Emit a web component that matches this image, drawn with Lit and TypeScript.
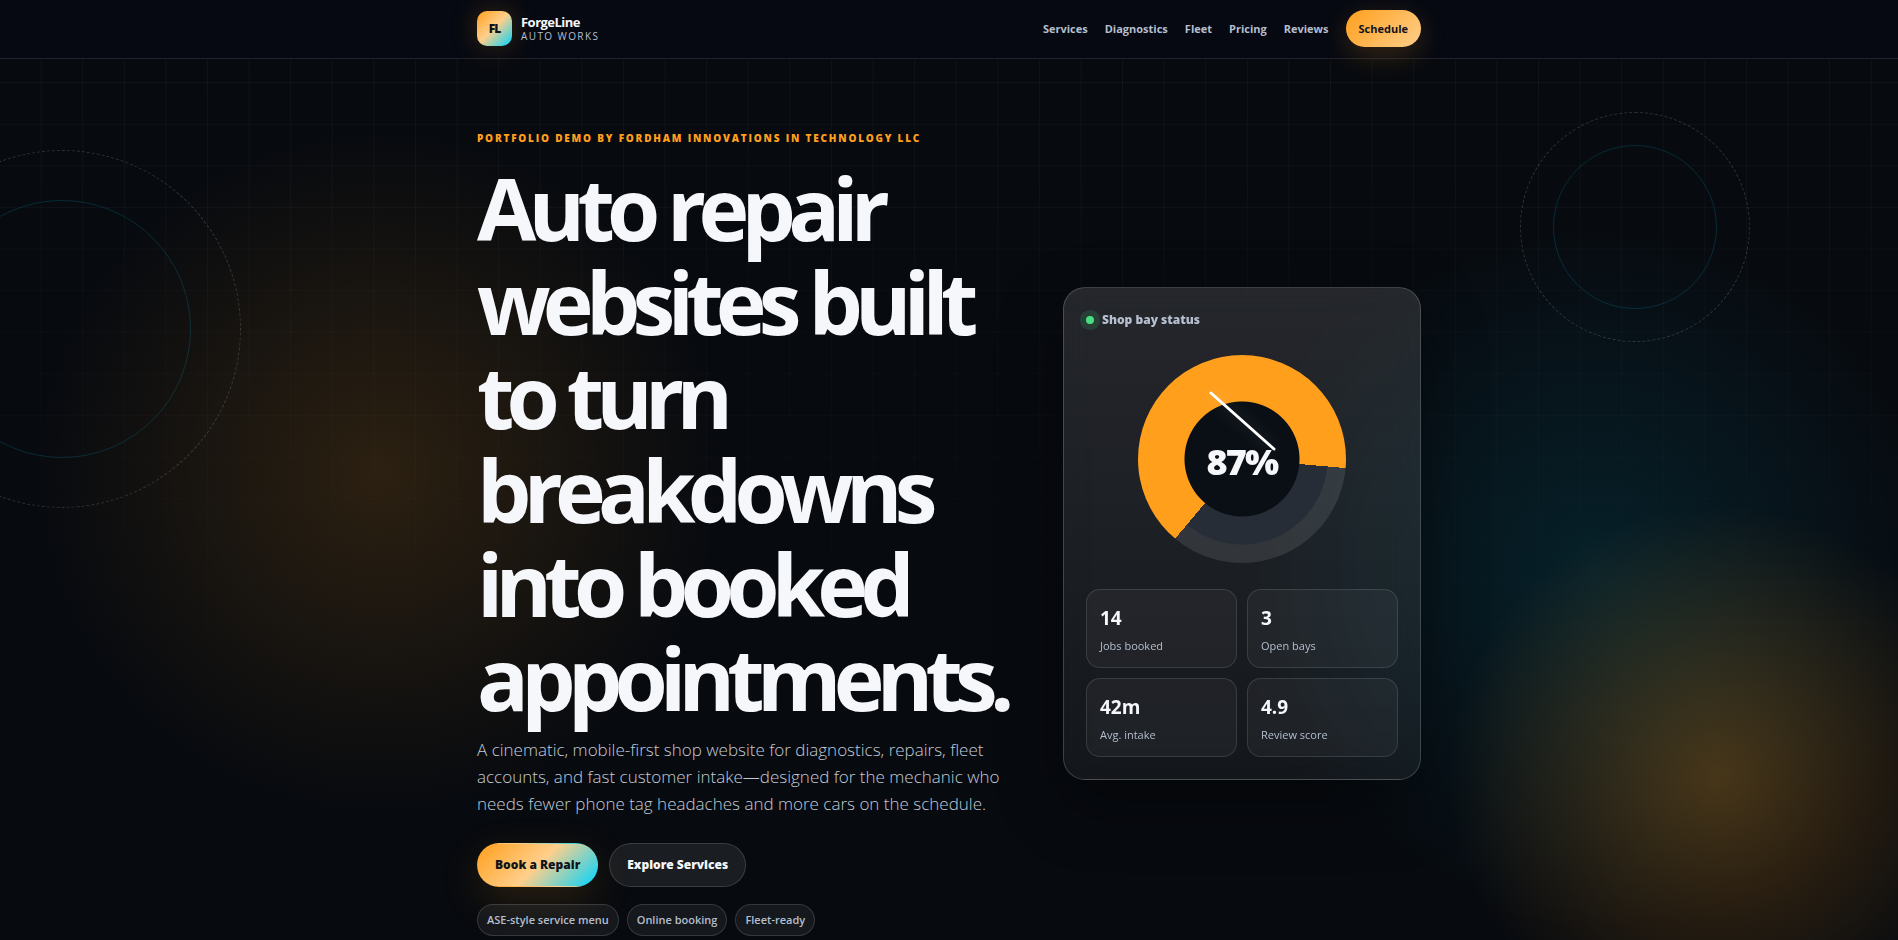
import { LitElement, html, css } from "lit";
import { customElement } from "lit/decorators.js";

const NAV = ["Services", "Diagnostics", "Fleet", "Pricing", "Reviews"];
const CHIPS = ["ASE-style service menu", "Online booking", "Fleet-ready"];
const STATS = [
  ["14", "Jobs booked"],
  ["3", "Open bays"],
  ["42m", "Avg. intake"],
  ["4.9", "Review score"],
];

@customElement("shop-status")
class ShopStatus extends LitElement {
  static styles = css`
    :host {
      display: block;
      box-sizing: border-box;
      padding: 22px;
      border: 1px solid rgba(255, 255, 255, 0.18);
      border-radius: 22px;
      background: linear-gradient(180deg, rgba(255, 255, 255, 0.12), rgba(255, 255, 255, 0.055));
      box-shadow: 0 24px 64px rgba(0, 0, 0, 0.4);
      backdrop-filter: blur(18px);
    }
    .head {
      display: flex;
      align-items: center;
      gap: 8px;
      margin: 0;
      color: #b5bfce;
      font-size: 12px;
      font-weight: 800;
      line-height: 20px;
    }
    .dot {
      width: 8px;
      height: 8px;
      border-radius: 50%;
      background: #4ade80;
      box-shadow: 0 0 0 6px rgba(74, 222, 128, 0.14);
    }
    .gauge {
      position: relative;
      display: grid;
      place-items: center;
      box-sizing: border-box;
      width: 208px;
      height: 208px;
      margin: 25px auto 26px;
      padding-top: 4px;
      border-radius: 50%;
      background:
        radial-gradient(circle, #0a0e15 57px, transparent 58px),
        conic-gradient(from 220deg, #ff9f1c 0 235deg, transparent 235deg),
        radial-gradient(circle, #262d37 85px, rgba(255, 255, 255, 0.1) 86px);
    }
    .value {
      color: #f5f7fb;
      font-size: 36px;
      font-weight: 900;
      letter-spacing: -0.05em;
    }
    .needle {
      position: absolute;
      inset: 0;
      filter: drop-shadow(0 0 8px rgba(255, 255, 255, 0.2));
    }
    .stats {
      display: grid;
      grid-template-columns: 1fr 1fr;
      gap: 10px;
      margin: 0;
    }
    .stat {
      display: flex;
      flex-direction: column-reverse;
      gap: 4px;
      padding: 14px 13px 11px;
      border: 1px solid rgba(255, 255, 255, 0.12);
      border-radius: 14px;
      background: rgba(255, 255, 255, 0.04);
    }
    .stat dt {
      color: #b5bfce;
      font-size: 11px;
      line-height: 20px;
    }
    .stat dd {
      margin: 0;
      color: #f5f7fb;
      font-size: 19px;
      font-weight: 700;
      line-height: 28px;
    }
  `;

  render() {
    return html`
      <p class="head"><span class="dot"></span>Shop bay status</p>
      <div class="gauge">
        <span class="value">87%</span>
        <svg class="needle" viewBox="0 0 208 208" aria-hidden="true">
          <path d="M73 38 L136 94" stroke="#fff" stroke-width="3" stroke-linecap="round" />
        </svg>
      </div>
      <dl class="stats">
        ${STATS.map(([n, label]) => html`<div class="stat"><dt>${label}</dt><dd>${n}</dd></div>`)}
      </dl>
    `;
  }
}

@customElement("app-root")
class AppRoot extends LitElement {
  static styles = css`
    :host {
      display: block;
      position: relative;
      overflow: hidden;
      min-height: 100vh;
      background:
        radial-gradient(circle at 20% 48%, rgba(255, 159, 28, 0.15), transparent 345px),
        radial-gradient(circle at 1718px 775px, rgba(255, 159, 28, 0.26), transparent 270px),
        radial-gradient(circle at 84% 58%, rgba(0, 212, 255, 0.11), transparent 360px),
        #070a0f;
      color: #f5f7fb;
      font-family: "Open Sans", "Noto Sans", sans-serif;
    }
    a {
      color: inherit;
      text-decoration: none;
    }
    .grid {
      position: absolute;
      inset: 0;
      background-image:
        linear-gradient(rgba(255, 255, 255, 0.045) 1px, transparent 1px),
        linear-gradient(90deg, rgba(255, 255, 255, 0.045) 1px, transparent 1px);
      background-size: calc(52px * 0.8) calc(52px * 0.8);
      background-position: -1px -1px;
      mask-image: linear-gradient(#000, transparent 75%);
    }
    .ring {
      position: absolute;
      box-sizing: border-box;
      border: 1px dashed rgba(255, 255, 255, 0.16);
      border-radius: 50%;
    }
    .ring::after {
      content: "";
      position: absolute;
      inset: var(--inset);
      border: 1px solid rgba(0, 212, 255, 0.16);
      border-radius: 50%;
    }
    .ring.left {
      --inset: 49px;
      left: -117px;
      top: 150px;
      width: 358px;
      height: 358px;
    }
    .ring.right {
      --inset: 32px;
      right: 148px;
      top: 112px;
      width: 230px;
      height: 230px;
    }
    .wrap {
      width: min(944px, calc(100% - 32px));
      margin: 0 auto;
    }
    header {
      position: relative;
      border-bottom: 1px solid rgba(255, 255, 255, 0.1);
      background: #060912;
    }
    .bar {
      display: flex;
      align-items: center;
      justify-content: space-between;
      height: 56px;
      padding-bottom: 2px;
    }
    .brand {
      display: flex;
      align-items: center;
      gap: 9px;
    }
    .mark {
      display: grid;
      place-items: center;
      width: 35px;
      height: 35px;
      border-radius: 10px;
      background: linear-gradient(135deg, #ff9f1c, #ffcf8b 48%, #00d4ff);
      box-shadow: 0 0 28px rgba(255, 159, 28, 0.22);
      color: #11131a;
      font-size: 12px;
      font-weight: 900;
      letter-spacing: -0.08em;
    }
    .name {
      display: grid;
      font-size: 13px;
      font-weight: 700;
      line-height: 15px;
      letter-spacing: -0.04em;
    }
    .name small {
      color: #b5bfce;
      font-size: 10px;
      font-weight: 400;
      line-height: 12px;
      letter-spacing: 0.14em;
    }
    nav {
      display: flex;
      align-items: center;
      gap: 17px;
      color: #b5bfce;
      font-size: 11px;
      font-weight: 700;
    }
    .schedule {
      padding: 0 13px;
      border-radius: 19px;
      background: linear-gradient(135deg, #ff9f1c, #ffcf8b);
      box-shadow: 0 8px 28px rgba(255, 159, 28, 0.2);
      color: #11131a;
      line-height: 37px;
    }
    .hero {
      position: relative;
      display: grid;
      grid-template-columns: minmax(0, 1fr) 358px;
      align-items: center;
      gap: 48px;
      padding: 72px 0 48px;
    }
    .eyebrow {
      margin: 0;
      color: #ff9f1c;
      font-size: 10px;
      font-weight: 900;
      line-height: 14px;
      letter-spacing: 0.18em;
    }
    h1 {
      margin: 16px 0 0;
      font-size: 86px;
      font-weight: 700;
      line-height: 94px;
      letter-spacing: -0.09em;
    }
    .lead {
      margin: 11px 0 0;
      color: #c2cbd8;
      font-size: 17px;
      font-weight: 300;
      line-height: 27px;
    }
    .actions {
      display: flex;
      gap: 11px;
      margin-top: 26px;
    }
    .btn {
      padding: 0 17px;
      border: 1px solid rgba(255, 255, 255, 0.14);
      border-radius: 22px;
      background: rgba(255, 255, 255, 0.08);
      font-size: 12px;
      font-weight: 800;
      line-height: 42px;
    }
    .btn.primary {
      border-color: transparent;
      background: linear-gradient(135deg, #ff9f1c, #ffcf8b 50%, #00d4ff);
      box-shadow: 0 13px 40px rgba(255, 159, 28, 0.15);
      color: #11131a;
    }
    .chips {
      display: flex;
      gap: 8px;
      margin: 17px 0 0;
      padding: 0;
      list-style: none;
    }
    .chips li {
      padding: 0 9px;
      border: 1px solid rgba(255, 255, 255, 0.14);
      border-radius: 16px;
      background: rgba(255, 255, 255, 0.06);
      color: #b5bfce;
      font-size: 11px;
      font-weight: 600;
      line-height: 30px;
    }
  `;

  render() {
    return html`
      <div class="grid"></div>
      <div class="ring left"></div>
      <div class="ring right"></div>
      <header>
        <div class="wrap bar">
          <a class="brand" href="#top">
            <span class="mark">FL</span>
            <span class="name">ForgeLine<small>AUTO WORKS</small></span>
          </a>
          <nav>
            ${NAV.map((n) => html`<a href="#${n.toLowerCase()}">${n}</a>`)}
            <a class="schedule" href="#schedule">Schedule</a>
          </nav>
        </div>
      </header>
      <main class="wrap hero">
        <section>
          <p class="eyebrow">PORTFOLIO DEMO BY FORDHAM INNOVATIONS IN TECHNOLOGY LLC</p>
          <h1>Auto repair websites built to turn breakdowns into booked appointments.</h1>
          <p class="lead">
            A cinematic, mobile-first shop website for diagnostics, repairs, fleet accounts, and fast
            customer intake—designed for the mechanic who needs fewer phone tag headaches and more cars
            on the schedule.
          </p>
          <div class="actions">
            <a class="btn primary" href="#schedule">Book a Repair</a>
            <a class="btn" href="#services">Explore Services</a>
          </div>
          <ul class="chips">
            ${CHIPS.map((c) => html`<li>${c}</li>`)}
          </ul>
        </section>
        <shop-status></shop-status>
      </main>
    `;
  }
}
